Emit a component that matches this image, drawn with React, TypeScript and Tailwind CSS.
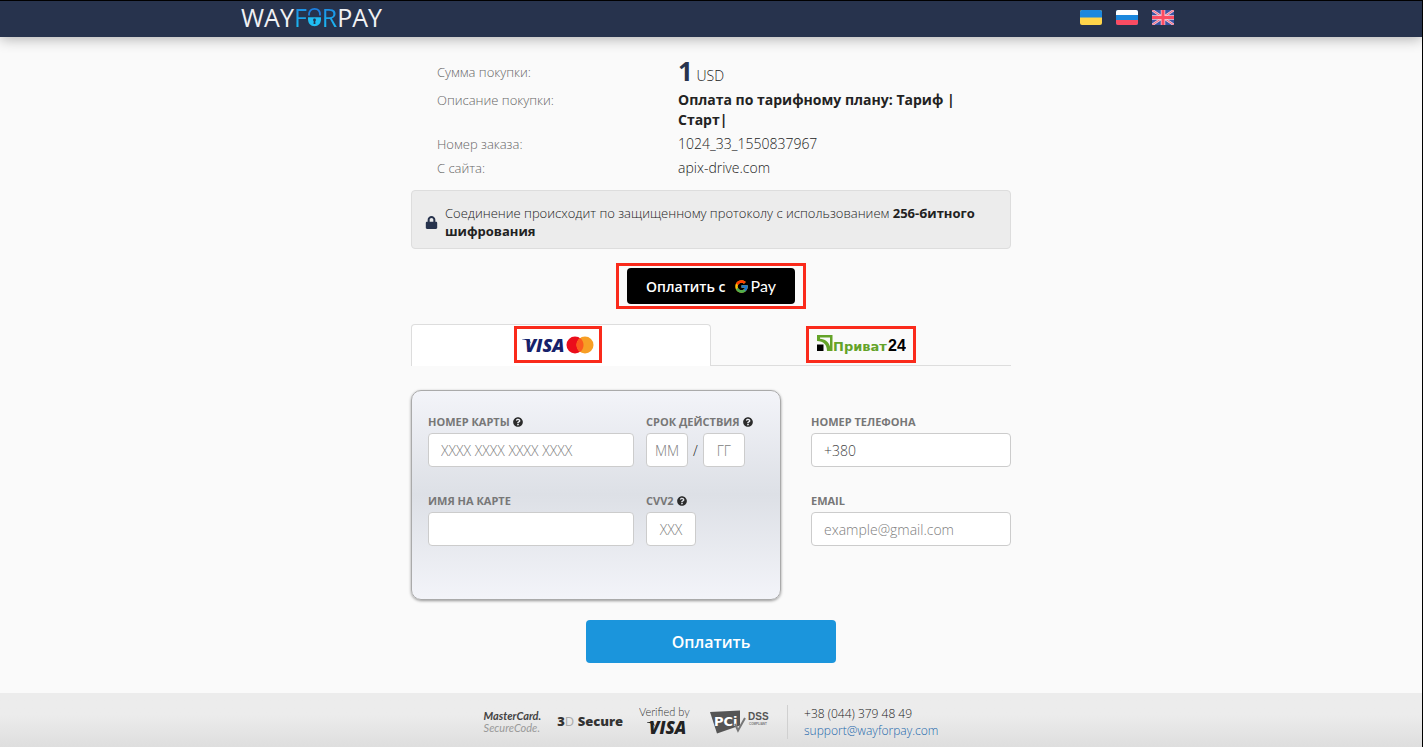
import type { InputHTMLAttributes, ReactNode } from "react";
import { FaLock, FaQuestionCircle } from "react-icons/fa";
import { FcGoogle } from "react-icons/fc";

interface FieldProps extends InputHTMLAttributes<HTMLInputElement> {
  id: string;
  label: string;
  hint?: string;
}

const inputClass =
  "h-[34px] rounded border border-[#cccccc] bg-white text-[14px] font-light text-[#444444] placeholder:text-[#808080] outline-none focus:border-[#1b95dc]";

function FieldLabel({
  id,
  label,
  hint,
}: {
  id: string;
  label: string;
  hint?: string;
}) {
  return (
    <div className="flex h-[22px] items-center gap-[3px]">
      <label
        htmlFor={id}
        className="text-[11px] font-bold whitespace-nowrap text-[#777777] uppercase"
      >
        {label}
      </label>
      {hint && (
        <button type="button" aria-label={hint} className="text-[#2b2b2b]">
          <FaQuestionCircle size={10} />
        </button>
      )}
    </div>
  );
}

function Field({ id, label, hint, className, ...props }: FieldProps) {
  return (
    <div>
      <FieldLabel id={id} label={label} hint={hint} />
      <input id={id} className={`${inputClass} ${className}`} {...props} />
    </div>
  );
}

function Logo() {
  return (
    <a
      href="#"
      aria-label="WayForPay"
      className="flex items-center text-[25px] leading-8 font-normal text-[#f0f1f4]"
    >
      <span>WAY</span>
      <span className="bg-linear-to-b from-[#1d7fe0] to-[#1fc4f4] bg-clip-text text-transparent">
        F
      </span>
      <svg width="15" height="20" viewBox="0 0 15 20" aria-hidden="true">
        <path
          d="M2 8.500V7.500C2 4 4.200 1.800 7.500 1.800S13 4 13 7.500v1"
          fill="none"
          stroke="#1d7fe0"
          strokeWidth="1.800"
        />
        <path
          d="M1 10.300h13v1.700c0 4.500-2.600 7.200-6.500 7.200S1 16.500 1 12z"
          fill="#1fbdf2"
        />
        <circle cx="7.500" cy="13" r="1.400" fill="#27334d" />
        <path d="M6.900 13h1.200l.4 4h-2z" fill="#27334d" />
      </svg>
      <span className="bg-linear-to-b from-[#1d7fe0] to-[#1fc4f4] bg-clip-text text-transparent">
        R
      </span>
      <span>PAY</span>
    </a>
  );
}

function Flags() {
  return (
    <nav className="flex gap-[14px]" aria-label="Язык">
      <a href="#uk" aria-label="Українська">
        <svg width="22" height="15" viewBox="0 0 22 15">
          <rect width="22" height="15" rx="2" fill="#ffd54a" />
          <path d="M2 0h18a2 2 0 0 1 2 2v5.500H0V2a2 2 0 0 1 2-2z" fill="#1c88dd" />
        </svg>
      </a>
      <a href="#ru" aria-label="Русский">
        <svg width="22" height="15" viewBox="0 0 22 15">
          <rect width="22" height="15" rx="2" fill="#1c88dd" />
          <path d="M2 0h18a2 2 0 0 1 2 2v3H0V2a2 2 0 0 1 2-2z" fill="#ffffff" />
          <path d="M0 10h22v3a2 2 0 0 1-2 2H2a2 2 0 0 1-2-2z" fill="#fb4c62" />
        </svg>
      </a>
      <a href="#en" aria-label="English">
        <svg width="22" height="15" viewBox="0 0 22 15">
          <rect width="22" height="15" rx="1" fill="#3a54a4" />
          <path d="M0 0l22 15M22 0L0 15" stroke="#f2c6d6" strokeWidth="2.500" />
          <path d="M0 0l22 15M22 0L0 15" stroke="#f5647c" strokeWidth="1" />
          <path d="M11 0v15M0 7.500h22" stroke="#f6ccd8" strokeWidth="4.500" />
          <path d="M11 0v15M0 7.500h22" stroke="#fb4c62" strokeWidth="3" />
        </svg>
      </a>
    </nav>
  );
}

function VisaMastercard() {
  return (
    <svg width="74" height="30" viewBox="0 0 74 30" aria-hidden="true">
      <path d="M1 9h7l2 4.200C8 11 5 9.800 1 9.300z" fill="#16216a" />
      <text
        x="4"
        y="22"
        fill="#16216a"
        fontFamily="Open Sans"
        fontSize="18"
        fontStyle="italic"
        fontWeight="800"
      >
        VISA
      </text>
      <circle cx="54" cy="15" r="8.500" fill="#eb0d1b" />
      <circle cx="64" cy="15" r="8.500" fill="#f79f25" />
      <path d="M59 8.100a8.500 8.500 0 0 1 0 13.800 8.500 8.500 0 0 1 0-13.800z" fill="#fb5b1e" />
    </svg>
  );
}

function Privat24() {
  return (
    <svg width="90" height="22" viewBox="0 0 90 22" aria-hidden="true">
      <path
        d="M1 1h15.500v16H11C11 10.500 7.500 7.200 1 7z"
        fill="#64a329"
      />
      <path d="M4 3.500h10v9C12.500 7.500 9 5.200 4 4.800z" fill="#fafafa" />
      <path d="M1 10.500h6.500V17H1z" fill="#000000" />
      <text
        x="17"
        y="17"
        fill="#64a329"
        fontFamily="DejaVu Sans"
        fontSize="13"
        fontWeight="700"
      >
        Приват
      </text>
      <text
        x="72"
        y="17"
        fill="#000000"
        fontFamily="Liberation Sans"
        fontSize="16"
        fontWeight="700"
      >
        24
      </text>
    </svg>
  );
}

function VerifiedByVisa() {
  return (
    <svg width="54" height="36" viewBox="0 0 54 36" role="img" aria-label="Verified by VISA">
      <text x="0" y="12" fill="#333333" fontFamily="Lato" fontSize="11">
        Verified by
      </text>
      <path d="M8 18h6l2 4c-2-2-4.500-3-8-3.600z" fill="#222222" />
      <text
        x="10"
        y="30"
        fill="#222222"
        fontFamily="Open Sans"
        fontSize="17"
        fontStyle="italic"
        fontWeight="800"
      >
        VISA
      </text>
    </svg>
  );
}

function PciDss() {
  return (
    <svg width="62" height="26" viewBox="0 0 62 26" role="img" aria-label="PCI DSS compliant">
      <path d="M1 3l30-1.500v15L8 24.500z" fill="#555555" />
      <text
        x="5"
        y="17"
        fill="#ffffff"
        fontFamily="DejaVu Sans"
        fontSize="13"
        fontWeight="700"
      >
        PCi
      </text>
      <path d="M26 15l3 6.500L36 9" fill="none" stroke="#777777" strokeWidth="2" />
      <text
        x="39"
        y="11"
        fill="#555555"
        fontFamily="Liberation Sans"
        fontSize="10"
        fontWeight="700"
      >
        DSS
      </text>
      <text
        x="40"
        y="16"
        fill="#777777"
        fontFamily="Liberation Sans"
        fontSize="3"
        fontWeight="700"
      >
        COMPLIANT
      </text>
    </svg>
  );
}

const details: { label: string; value: ReactNode }[] = [
  {
    label: "Номер заказа:",
    value: "1024_33_1550837967",
  },
  {
    label: "С сайта:",
    value: "apix-drive.com",
  },
];

export default function App() {
  return (
    <div className="flex min-h-screen flex-col border-t border-r border-black bg-[#fafafa] font-['Open_Sans',sans-serif] text-[14px] font-light text-[#222222]">
      <header className="bg-[#27334d] shadow-[0_2px_14px_rgba(0,0,0,0.3)]">
        <div className="mx-auto flex h-9 max-w-[940px] items-center justify-between pr-[7px] pb-1">
          <Logo />
          <Flags />
        </div>
      </header>

      <main className="mx-auto w-full max-w-[600px] pt-5">
        <dl className="flex flex-col gap-1 pr-4 pl-[26px] leading-5">
          <div className="grid grid-cols-[241px_1fr] items-center">
            <dt className="text-[13px] text-[#666666]">Сумма покупки:</dt>
            <dd>
              <strong className="text-[26px] leading-[29px] font-bold text-[#27334d]">
                1
              </strong>{" "}
              USD
            </dd>
          </div>
          <div className="grid grid-cols-[241px_1fr]">
            <dt className="text-[13px] text-[#666666]">Описание покупки:</dt>
            <dd className="font-bold">
              Оплата по тарифному плану: Тариф | Старт|
            </dd>
          </div>
          {details.map((item) => (
            <div key={item.label} className="grid grid-cols-[241px_1fr]">
              <dt className="text-[13px] text-[#666666]">{item.label}</dt>
              <dd>{item.value}</dd>
            </div>
          ))}
        </dl>

        <div className="mt-3 flex items-center gap-[7px] rounded border border-[#dddddd] bg-[#ececec] px-[13px] pt-[13px] pb-2 text-[13px] leading-[18px]">
          <FaLock size={13} className="shrink-0 text-[#27334d]" />
          <p>
            Соединение происходит по защищенному протоколу с использованием{" "}
            <strong className="font-bold">256-битного шифрования</strong>
          </p>
        </div>

        <div className="mx-auto mt-[14px] w-fit border-3 border-[#fa2a1b] px-2 py-0.5">
          <button
            type="button"
            className="flex h-9 w-[168px] items-center justify-center gap-2 rounded bg-black text-white"
          >
            <span className="text-[14px] font-semibold">Оплатить с</span>
            <span className="flex items-center gap-0.5">
              <FcGoogle size={15} />
              <span className="font-['Lato',sans-serif] text-[16px] font-normal">
                Pay
              </span>
            </span>
          </button>
        </div>

        <div role="tablist" className="mt-[15px] grid h-[42px] grid-cols-2">
          <button
            type="button"
            role="tab"
            aria-selected="true"
            aria-label="Visa Mastercard"
            className="flex justify-center rounded-t border border-b-0 border-[#dddddd] bg-white pt-px pr-[6px]"
          >
            <span className="flex h-[37px] w-[88px] items-center justify-center border-3 border-[#fa2a1b]">
              <VisaMastercard />
            </span>
          </button>
          <button
            type="button"
            role="tab"
            aria-selected="false"
            aria-label="Приват24"
            className="flex justify-center border-b border-[#dddddd] pt-0.5"
          >
            <span className="flex h-[37px] w-[110px] items-center justify-center border-3 border-[#fa2a1b]">
              <Privat24 />
            </span>
          </button>
        </div>

        <form className="mt-6">
          <div className="flex gap-[30px]">
            <div className="grid h-[210px] w-[370px] shrink-0 grid-cols-[206px_1fr] content-start gap-x-3 gap-y-[23px] rounded-[10px] border border-[#aaaaaa] bg-linear-to-b from-[#f3f4f9] via-[#dde0e6] to-[#f3f4f9] px-4 pt-5 shadow-[0_1px_3px_rgba(0,0,0,0.4)]">
              <Field
                id="card"
                label="Номер карты"
                hint="Что такое номер карты"
                placeholder="XXXX XXXX XXXX XXXX"
                className="w-full px-3"
              />
              <div>
                <FieldLabel
                  id="month"
                  label="Срок действия"
                  hint="Что такое срок действия"
                />
                <div className="flex items-center gap-[5px]">
                  <input
                    id="month"
                    placeholder="ММ"
                    className={`${inputClass} w-[42px] text-center`}
                  />
                  <span>/</span>
                  <input
                    id="year"
                    aria-label="Год"
                    placeholder="ГГ"
                    className={`${inputClass} w-[42px] text-center`}
                  />
                </div>
              </div>
              <Field id="holder" label="Имя на карте" className="w-full px-3" />
              <Field
                id="cvv"
                label="CVV2"
                hint="Что такое CVV2"
                placeholder="XXX"
                className="w-[50px] text-center"
              />
            </div>

            <div className="flex flex-1 flex-col gap-[23px] pt-[21px]">
              <Field
                id="phone"
                type="tel"
                label="Номер телефона"
                defaultValue="+380"
                className="w-full px-3"
              />
              <Field
                id="email"
                type="email"
                label="Email"
                placeholder="example@gmail.com"
                className="w-full px-3"
              />
            </div>
          </div>

          <button
            type="submit"
            className="mx-auto mt-5 block h-[43px] w-[250px] rounded bg-[#1b95dc] text-[16px] font-semibold text-white"
          >
            Оплатить
          </button>
        </form>
      </main>

      <footer className="mt-[30px] flex grow items-center justify-center bg-linear-to-b from-[#ececec] from-40% to-[#dedede] pt-1">
        <div className="flex items-center gap-4">
          <div className="font-['Lato',sans-serif] text-[11px] leading-3 italic">
            <p className="font-bold text-[#444444]">MasterCard.</p>
            <p className="font-normal text-[#999999]">SecureCode.</p>
          </div>
          <p className="text-[13px] font-extrabold text-[#333333]">
            3<span className="font-normal text-[#aaaaaa]">D</span> Secure
          </p>
          <VerifiedByVisa />
          <PciDss />
          <address className="border-l border-[#d0d0d0] pl-4 text-[12px] leading-[17px] not-italic">
            <p className="text-[#222222]">+38 (044) 379 48 49</p>
            <a href="mailto:support@wayforpay.com" className="text-[#1c68ac]">
              support@wayforpay.com
            </a>
          </address>
        </div>
      </footer>
    </div>
  );
}
